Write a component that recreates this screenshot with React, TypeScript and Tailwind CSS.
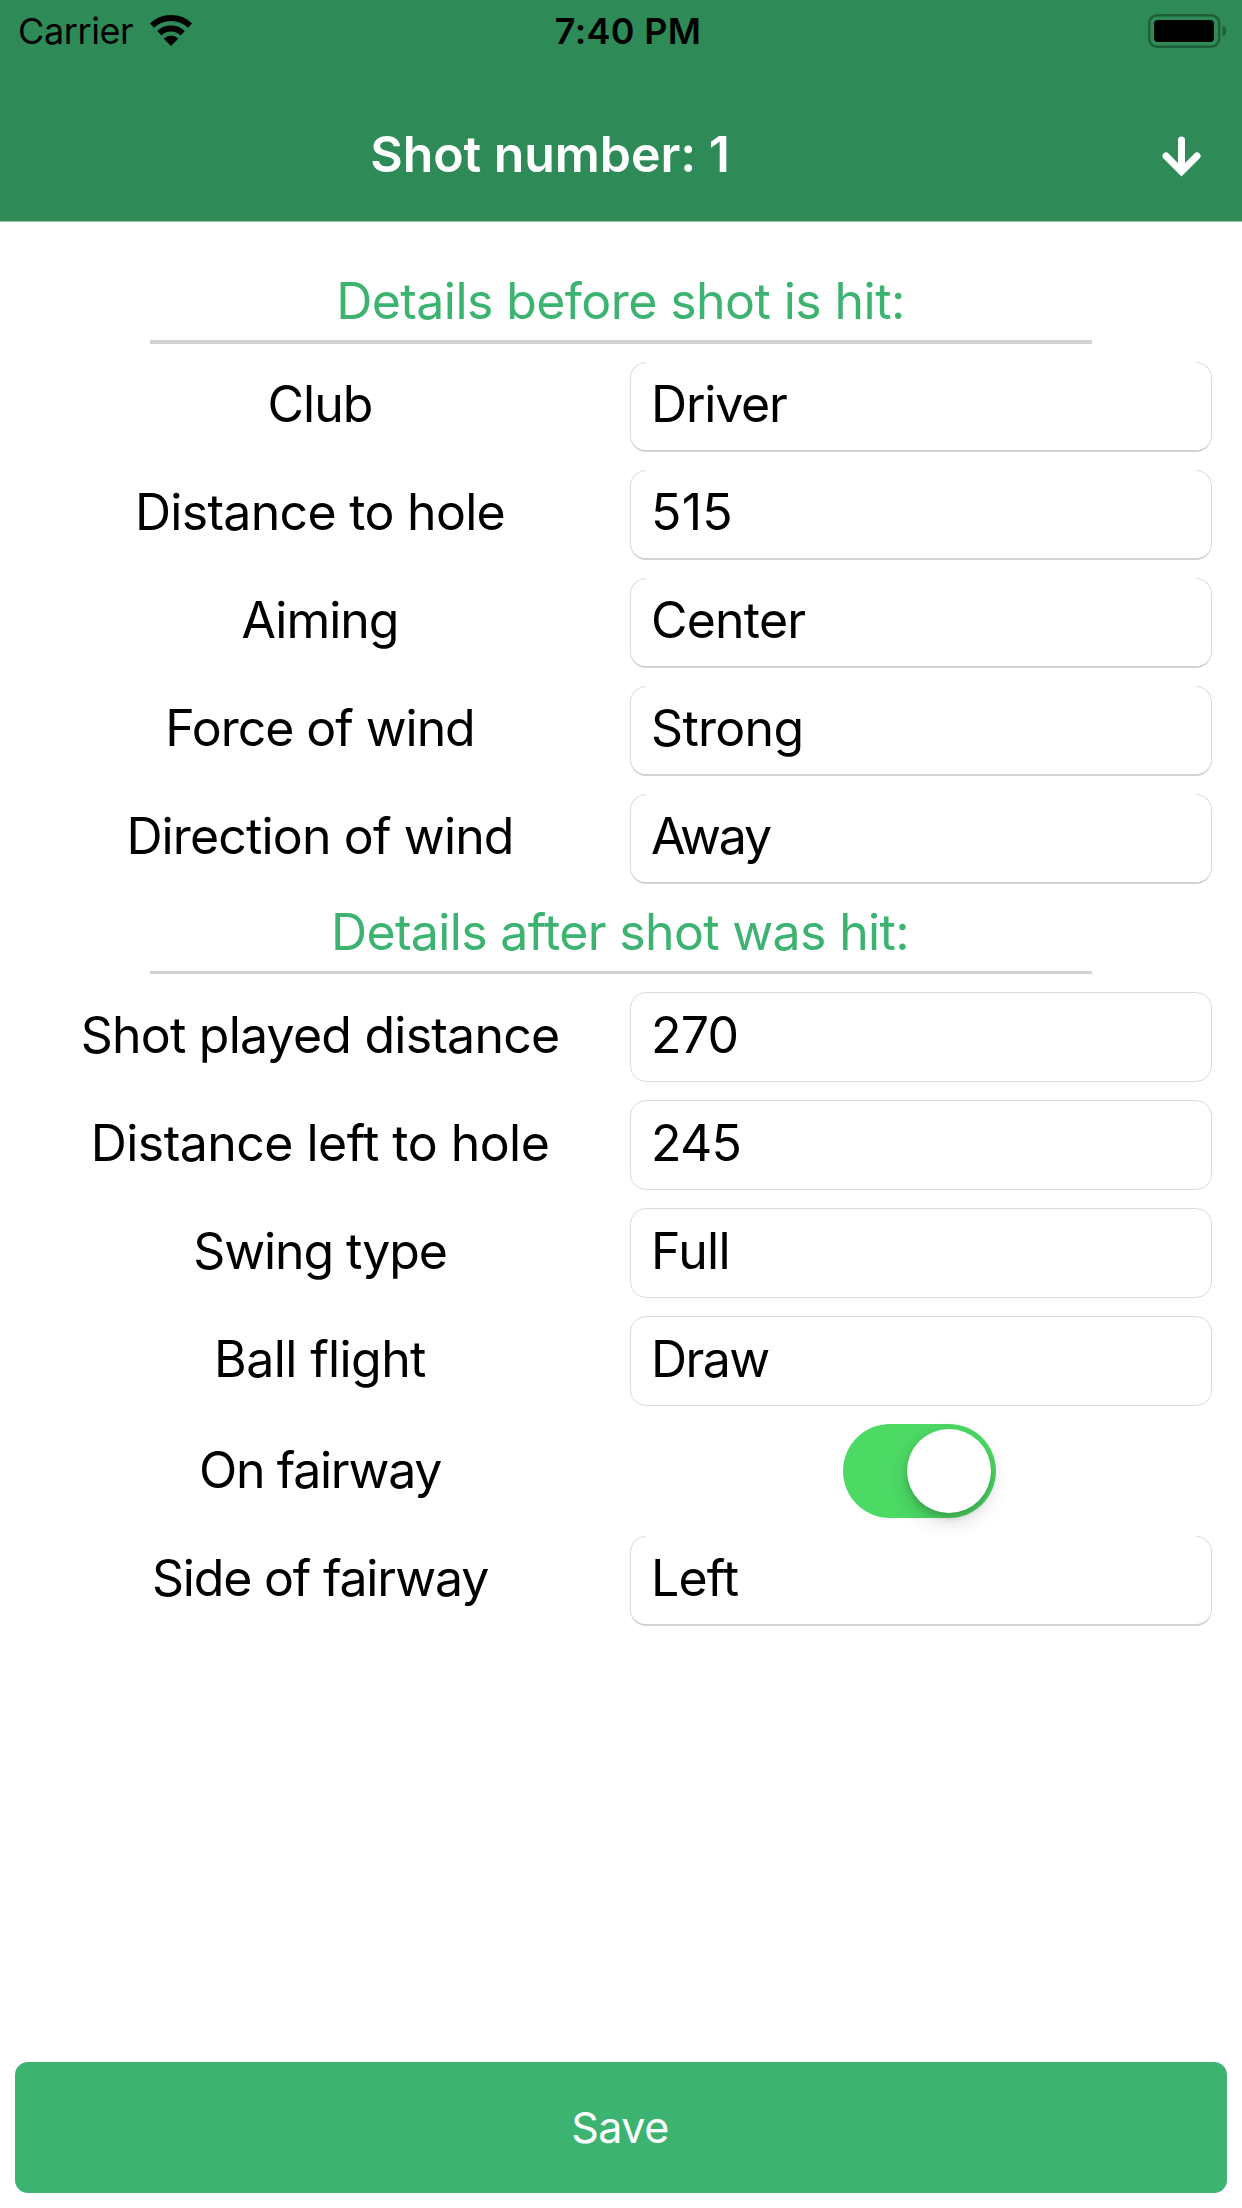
type Field = { label: string; labelSpacing: string; value?: string; valueSpacing?: string };

const before: Field[] = [
  { label: "Club", labelSpacing: "tracking-[-1px]", value: "Driver", valueSpacing: "tracking-[-1.2px]" },
  { label: "Distance to hole", labelSpacing: "tracking-[-0.7px]", value: "515", valueSpacing: "tracking-[0.3px]" },
  { label: "Aiming", labelSpacing: "tracking-[-1px]", value: "Center", valueSpacing: "tracking-[-0.8px]" },
  { label: "Force of wind", labelSpacing: "tracking-[-1.05px]", value: "Strong", valueSpacing: "tracking-[-0.7px]" },
  { label: "Direction of wind", labelSpacing: "tracking-[-0.85px]", value: "Away", valueSpacing: "tracking-[-2.1px]" },
];

const after: Field[] = [
  { label: "Shot played distance", labelSpacing: "tracking-[-0.77px]", value: "270", valueSpacing: "tracking-[-0.8px]" },
  { label: "Distance left to hole", labelSpacing: "tracking-[-0.53px]", value: "245", valueSpacing: "tracking-[-0.8px]" },
  { label: "Swing type", labelSpacing: "tracking-[-1.1px]", value: "Full", valueSpacing: "tracking-[-0.7px]" },
  { label: "Ball flight", labelSpacing: "tracking-[-0.6px]", value: "Draw", valueSpacing: "tracking-[-1.6px]" },
];

function Label({ field }: { field: Field }) {
  return (
    <div className={`w-[630px] shrink-0 pl-[10px] text-center leading-[60px] ${field.labelSpacing}`}>{field.label}</div>
  );
}

function Row({ field, picker }: { field: Field; picker: boolean }) {
  const frame = picker
    ? "pb-[5px] border-b-2 border-b-[#d2d2d2] before:absolute before:-top-px before:left-[15px] before:right-[15px] before:h-px before:bg-white"
    : "pb-[4px]";
  return (
    <div className="flex h-[108px] items-center">
      <div className={picker ? "pb-[6px]" : "pb-[4px]"}>
        <Label field={field} />
      </div>
      <div
        className={`relative flex h-[90px] w-[582px] items-center rounded-[16px] border border-[#dcdcdc] pl-[20px] ${frame}`}
      >
        <span className={field.valueSpacing}>{field.value}</span>
      </div>
    </div>
  );
}

function WifiIcon() {
  return (
    <svg className="ml-[16px] h-[34px] w-[44px]" viewBox="0 0 44 34" fill="none" stroke="#000" strokeWidth="6">
      <path d="M3 11.6 A27.5 27.5 0 0 1 41 11.6" />
      <path d="M10.3 19.2 A17 17 0 0 1 33.7 19.2" />
      <path d="M14.6 24.6 Q22 18.6 29.4 24.6 L22 32 Z" fill="#000" stroke="none" />
    </svg>
  );
}

function BatteryIcon() {
  return (
    <svg className="h-[36px] w-[80px]" viewBox="0 0 80 36">
      <rect x="1.2" y="2.2" width="70" height="31.6" rx="8" fill="none" stroke="#1f5e3b" strokeWidth="2.4" />
      <rect x="6" y="7" width="60" height="22" rx="4" fill="#000" />
      <path d="M74.6 12.5 C79.5 14 79.5 22 74.6 23.5 Z" fill="#1f5e3b" />
    </svg>
  );
}

function SectionTitle({ children, className }: { children: string; className: string }) {
  return (
    <h2 className={`mx-[150px] shrink-0 border-[#d2d2d2] text-center leading-[60px] text-[#3cb371] ${className}`}>
      {children}
    </h2>
  );
}

export default function App() {
  return (
    <div className="flex h-[2208px] w-[1242px] flex-col bg-white font-['Inter',sans-serif] text-[50px] font-normal text-black">
      <header className="h-[222px] shrink-0 border-b border-[#93c2a7] bg-[#2e8b57]">
        <div className="grid h-[62px] grid-cols-3 items-center text-[36px] leading-[44px]">
          <div className="flex items-center pl-[18px]">
            <span className="tracking-[-0.4px]">Carrier</span>
            <WifiIcon />
          </div>
          <div className="pl-[14px] text-center font-semibold tracking-[0.3px]">7:40 PM</div>
          <div className="flex justify-end pr-[14px]">
            <BatteryIcon />
          </div>
        </div>
        <div className="flex h-[160px] items-center">
          <h1 className="mt-[23px] w-[1100px] text-center font-semibold leading-[60px] tracking-[-0.05px] text-white">
            Shot number: 1
          </h1>
          <svg
            className="ml-[62px] mt-[28px] h-[41px] w-[39px]"
            viewBox="0 0 39 41"
            fill="none"
            stroke="#fff"
            strokeWidth="7"
            strokeLinecap="round"
          >
            <path d="M19.5 4 V34" />
            <path d="M4 20 L19.5 35.5 L35 20" strokeLinejoin="miter" />
          </svg>
        </div>
      </header>

      <main className="flex flex-1 flex-col [font-feature-settings:'calt'_0]">
        <SectionTitle className="mb-[9px] h-[122px] border-b-4 pr-[1px] pt-[49px] tracking-[-0.57px]">
          Details before shot is hit:
        </SectionTitle>
        {before.map((f) => (
          <Row key={f.label} field={f} picker />
        ))}
        <SectionTitle className="mb-[9px] h-[81px] border-b-[3px] pr-[2px] pt-[9px] tracking-[-0.65px]">
          Details after shot was hit:
        </SectionTitle>
        {after.map((f) => (
          <Row key={f.label} field={f} picker={false} />
        ))}
        <div className="flex h-[112px] items-center">
          <div className="pb-[2px]">
            <Label field={{ label: "On fairway", labelSpacing: "tracking-[-1.35px]" }} />
          </div>
          <div className="flex w-[582px] justify-center pr-[3px]">
            <div className="flex h-[94px] w-[153px] items-center justify-end rounded-full bg-[#4cd964] pr-[5px]">
              <div className="h-[84px] w-[84px] rounded-full bg-white shadow-[0_8px_20px_rgba(0,0,0,0.16),0_5px_6px_rgba(0,0,0,0.13)]" />
            </div>
          </div>
        </div>
        <Row
          field={{ label: "Side of fairway", labelSpacing: "tracking-[-1.2px]", value: "Left", valueSpacing: "tracking-[-0.8px]" }}
          picker
        />
      </main>

      <button className="mx-[15px] mb-[15px] h-[131px] shrink-0 rounded-[13px] bg-[#3cb371] pb-[1px] pr-[2px] text-[43px] tracking-[-0.5px] text-white">
        Save
      </button>
    </div>
  );
}
